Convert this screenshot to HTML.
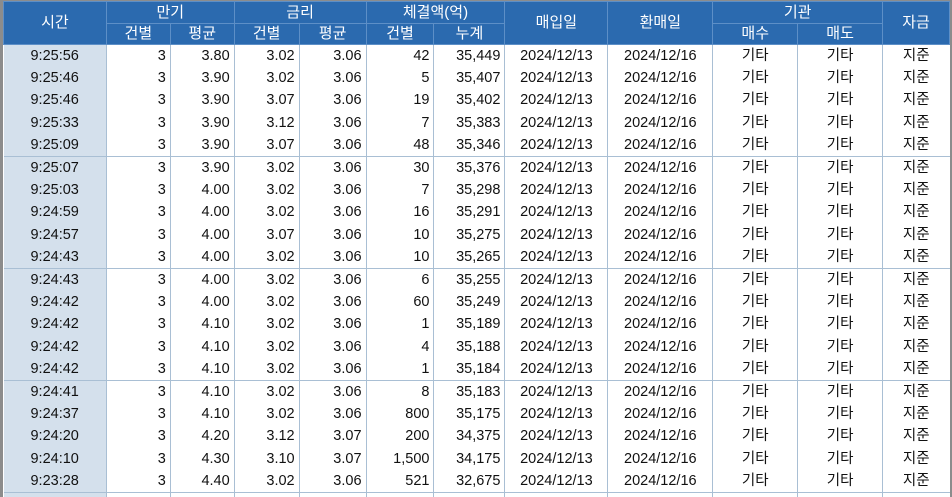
<!DOCTYPE html>
<html><head><meta charset="utf-8"><style>
body{margin:0;width:952px;height:497px;overflow:hidden;background:#fff;font-family:"Liberation Sans","Noto Sans CJK KR",sans-serif;}
.wrap{position:absolute;left:0;top:0;width:952px;height:497px;overflow:hidden;border-left:3px solid #8c8c8c;border-top:1px solid #8c8c8c;border-right:2px solid #8c8c8c;box-sizing:border-box;}
table{border-collapse:collapse;table-layout:fixed;position:absolute;left:0;top:0;}
th{background:#2b6aaf;color:#fff;font-weight:normal;font-size:15px;border:1px solid #5d8fc7;padding:0;line-height:16px;}
tr.h1{height:22px}tr.h2{height:21px}
tr{height:22.4px}
td{font-size:14.5px;color:#111;padding:0 4px 0 0;border-left:1px solid #a9bfd4;text-align:right;line-height:16px;white-space:nowrap;}
td.t{background:#d4e0ec;text-align:center;padding:0;border-left:none}
td.c{text-align:center;padding:0}
tr.g td{border-bottom:1px solid #a9bfd4;}
</style></head><body><div class="wrap">
<table>
<colgroup><col style="width:103px"><col style="width:64px"><col style="width:64px"><col style="width:65px"><col style="width:67px"><col style="width:68px"><col style="width:71px"><col style="width:103px"><col style="width:105px"><col style="width:85px"><col style="width:85px"><col style="width:67px"></colgroup>
<tr class="h1"><th rowspan="2">시간</th><th colspan="2">만기</th><th colspan="2">금리</th><th colspan="2">체결액(억)</th><th rowspan="2">매입일</th><th rowspan="2">환매일</th><th colspan="2">기관</th><th rowspan="2">자금</th></tr>
<tr class="h2"><th>건별</th><th>평균</th><th>건별</th><th>평균</th><th>건별</th><th>누계</th><th>매수</th><th>매도</th></tr>
<tr><td class="t">9:25:56</td><td>3</td><td>3.80</td><td>3.02</td><td>3.06</td><td>42</td><td>35,449</td><td class="c">2024/12/13</td><td class="c">2024/12/16</td><td class="c">기타</td><td class="c">기타</td><td class="c">지준</td></tr>
<tr><td class="t">9:25:46</td><td>3</td><td>3.90</td><td>3.02</td><td>3.06</td><td>5</td><td>35,407</td><td class="c">2024/12/13</td><td class="c">2024/12/16</td><td class="c">기타</td><td class="c">기타</td><td class="c">지준</td></tr>
<tr><td class="t">9:25:46</td><td>3</td><td>3.90</td><td>3.07</td><td>3.06</td><td>19</td><td>35,402</td><td class="c">2024/12/13</td><td class="c">2024/12/16</td><td class="c">기타</td><td class="c">기타</td><td class="c">지준</td></tr>
<tr><td class="t">9:25:33</td><td>3</td><td>3.90</td><td>3.12</td><td>3.06</td><td>7</td><td>35,383</td><td class="c">2024/12/13</td><td class="c">2024/12/16</td><td class="c">기타</td><td class="c">기타</td><td class="c">지준</td></tr>
<tr class="g"><td class="t">9:25:09</td><td>3</td><td>3.90</td><td>3.07</td><td>3.06</td><td>48</td><td>35,346</td><td class="c">2024/12/13</td><td class="c">2024/12/16</td><td class="c">기타</td><td class="c">기타</td><td class="c">지준</td></tr>
<tr><td class="t">9:25:07</td><td>3</td><td>3.90</td><td>3.02</td><td>3.06</td><td>30</td><td>35,376</td><td class="c">2024/12/13</td><td class="c">2024/12/16</td><td class="c">기타</td><td class="c">기타</td><td class="c">지준</td></tr>
<tr><td class="t">9:25:03</td><td>3</td><td>4.00</td><td>3.02</td><td>3.06</td><td>7</td><td>35,298</td><td class="c">2024/12/13</td><td class="c">2024/12/16</td><td class="c">기타</td><td class="c">기타</td><td class="c">지준</td></tr>
<tr><td class="t">9:24:59</td><td>3</td><td>4.00</td><td>3.02</td><td>3.06</td><td>16</td><td>35,291</td><td class="c">2024/12/13</td><td class="c">2024/12/16</td><td class="c">기타</td><td class="c">기타</td><td class="c">지준</td></tr>
<tr><td class="t">9:24:57</td><td>3</td><td>4.00</td><td>3.07</td><td>3.06</td><td>10</td><td>35,275</td><td class="c">2024/12/13</td><td class="c">2024/12/16</td><td class="c">기타</td><td class="c">기타</td><td class="c">지준</td></tr>
<tr class="g"><td class="t">9:24:43</td><td>3</td><td>4.00</td><td>3.02</td><td>3.06</td><td>10</td><td>35,265</td><td class="c">2024/12/13</td><td class="c">2024/12/16</td><td class="c">기타</td><td class="c">기타</td><td class="c">지준</td></tr>
<tr><td class="t">9:24:43</td><td>3</td><td>4.00</td><td>3.02</td><td>3.06</td><td>6</td><td>35,255</td><td class="c">2024/12/13</td><td class="c">2024/12/16</td><td class="c">기타</td><td class="c">기타</td><td class="c">지준</td></tr>
<tr><td class="t">9:24:42</td><td>3</td><td>4.00</td><td>3.02</td><td>3.06</td><td>60</td><td>35,249</td><td class="c">2024/12/13</td><td class="c">2024/12/16</td><td class="c">기타</td><td class="c">기타</td><td class="c">지준</td></tr>
<tr><td class="t">9:24:42</td><td>3</td><td>4.10</td><td>3.02</td><td>3.06</td><td>1</td><td>35,189</td><td class="c">2024/12/13</td><td class="c">2024/12/16</td><td class="c">기타</td><td class="c">기타</td><td class="c">지준</td></tr>
<tr><td class="t">9:24:42</td><td>3</td><td>4.10</td><td>3.02</td><td>3.06</td><td>4</td><td>35,188</td><td class="c">2024/12/13</td><td class="c">2024/12/16</td><td class="c">기타</td><td class="c">기타</td><td class="c">지준</td></tr>
<tr class="g"><td class="t">9:24:42</td><td>3</td><td>4.10</td><td>3.02</td><td>3.06</td><td>1</td><td>35,184</td><td class="c">2024/12/13</td><td class="c">2024/12/16</td><td class="c">기타</td><td class="c">기타</td><td class="c">지준</td></tr>
<tr><td class="t">9:24:41</td><td>3</td><td>4.10</td><td>3.02</td><td>3.06</td><td>8</td><td>35,183</td><td class="c">2024/12/13</td><td class="c">2024/12/16</td><td class="c">기타</td><td class="c">기타</td><td class="c">지준</td></tr>
<tr><td class="t">9:24:37</td><td>3</td><td>4.10</td><td>3.02</td><td>3.06</td><td>800</td><td>35,175</td><td class="c">2024/12/13</td><td class="c">2024/12/16</td><td class="c">기타</td><td class="c">기타</td><td class="c">지준</td></tr>
<tr><td class="t">9:24:20</td><td>3</td><td>4.20</td><td>3.12</td><td>3.07</td><td>200</td><td>34,375</td><td class="c">2024/12/13</td><td class="c">2024/12/16</td><td class="c">기타</td><td class="c">기타</td><td class="c">지준</td></tr>
<tr><td class="t">9:24:10</td><td>3</td><td>4.30</td><td>3.10</td><td>3.07</td><td>1,500</td><td>34,175</td><td class="c">2024/12/13</td><td class="c">2024/12/16</td><td class="c">기타</td><td class="c">기타</td><td class="c">지준</td></tr>
<tr class="g"><td class="t">9:23:28</td><td>3</td><td>4.40</td><td>3.02</td><td>3.06</td><td>521</td><td>32,675</td><td class="c">2024/12/13</td><td class="c">2024/12/16</td><td class="c">기타</td><td class="c">기타</td><td class="c">지준</td></tr>
<tr><td class="t">&nbsp;</td><td></td><td></td><td></td><td></td><td></td><td></td><td></td><td></td><td></td><td></td><td></td></tr>
</table></div></body></html>
